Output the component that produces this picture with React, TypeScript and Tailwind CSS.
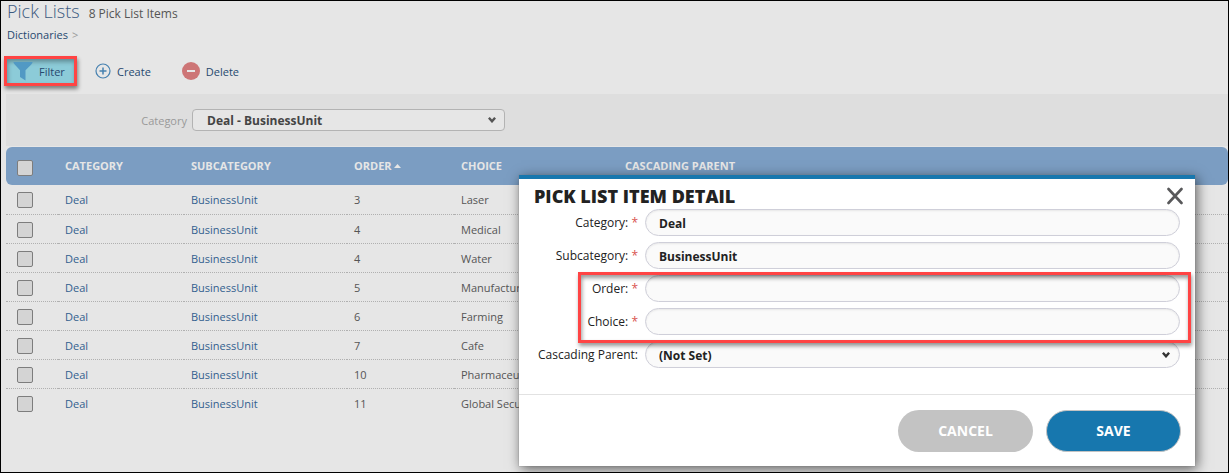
import React, { useState } from 'react';

interface PickListItem {
  id: number;
  order: number;
  choice: string;
}

const items: PickListItem[] = [
  { id: 1, order: 3, choice: 'Laser' },
  { id: 2, order: 4, choice: 'Medical' },
  { id: 3, order: 4, choice: 'Water' },
  { id: 4, order: 5, choice: 'Manufacturing' },
  { id: 5, order: 6, choice: 'Farming' },
  { id: 6, order: 7, choice: 'Cafe' },
  { id: 7, order: 10, choice: 'Pharmaceutical' },
  { id: 8, order: 11, choice: 'Global Security' },
];

const FunnelIcon = () => (
  <svg width="20" height="20" viewBox="0 0 20 20" fill="#5199c4" aria-hidden="true">
    <path d="M0.500 1h19c0 1-.5 1.700-1.200 2.400L12.500 9.200V19.500L7 16V9.200L1.700 3.400C1 2.700.5 2 .5 1z" />
  </svg>
);

const PlusIcon = () => (
  <svg width="16" height="16" viewBox="0 0 16 16" fill="none" stroke="#4681b0" aria-hidden="true">
    <circle cx="8" cy="8" r="7" strokeWidth="1.2" />
    <path d="M8 4.500v7M4.500 8h7" strokeWidth="1.500" />
  </svg>
);

const MinusIcon = () => (
  <svg width="18" height="18" viewBox="0 0 18 18" aria-hidden="true">
    <circle cx="9" cy="9" r="9" fill="#cd7576" />
    <path d="M5 9h8" stroke="#e6e6e6" strokeWidth="2" />
  </svg>
);

const CloseIcon = () => (
  <svg width="16" height="18" viewBox="0 0 16 18" fill="none" stroke="#58585a" strokeWidth="2.600" strokeLinecap="round" aria-hidden="true">
    <path d="M1.500 2l13 14M14.500 2l-13 14" />
  </svg>
);

const Chevron = ({ className }: { className: string }) => (
  <svg width="8" height="6" viewBox="0 0 8 6" fill="none" strokeWidth="2.400" aria-hidden="true" className={`pointer-events-none absolute top-1/2 -translate-y-1/2 ${className}`}>
    <path d="M0.900 0.800L4 4.300l3.100-3.500" />
  </svg>
);

const Checkbox = ({ label }: { label: string }) => (
  <input
    type="checkbox"
    aria-label={label}
    className="block size-4 appearance-none rounded-xs border border-[#7d7d7d] bg-[#d4d4d4] checked:bg-[#7b9dc2]"
  />
);

interface FieldProps {
  id: string;
  label: string;
  required?: boolean;
  children: React.ReactNode;
}

const Field = ({ id, label, required, children }: FieldProps) => (
  <div className="flex items-center gap-[7px]">
    <label htmlFor={id} className="w-[104px] shrink-0 text-right text-xs whitespace-nowrap text-[#222]">
      {label}:{required && <span className="text-[#d9534f]"> *</span>}
    </label>
    <div className="relative flex-1">{children}</div>
  </div>
);

const fieldClass =
  'block h-[27px] w-full appearance-none rounded-full border border-[#cfcfd9] bg-[#fafafa] px-[13px] pt-[2px] text-xs font-bold text-[#222] shadow-[inset_0_1px_2px_rgba(0,0,0,0.08)] outline-none';

const PickListDialog = ({ onClose }: { onClose: () => void }) => {
  const [order, setOrder] = useState('');
  const [choice, setChoice] = useState('');

  return (
    <div
      role="dialog"
      aria-labelledby="dialog-title"
      className="absolute top-[174px] right-[33px] w-[676px] border-t-4 border-[#1777ae] bg-white shadow-[0_0_1px_#777,2px_3px_12px_rgba(0,0,0,0.6)]"
    >
      <div className="flex h-[30px] items-center justify-between pr-3 pl-[15px] pt-[4px]">
        <h2 id="dialog-title" className="text-lg font-extrabold text-[#222]">PICK LIST ITEM DETAIL</h2>
        <button onClick={onClose} aria-label="Close"><CloseIcon /></button>
      </div>

      <form className="relative flex flex-col gap-[6px] pr-[15px] pb-[26px] pl-[15px]">
        <Field id="category" label="Category" required>
          <input id="category" className={fieldClass} defaultValue="Deal" />
        </Field>
        <Field id="subcategory" label="Subcategory" required>
          <input id="subcategory" className={fieldClass} defaultValue="BusinessUnit" />
        </Field>
        <Field id="order" label="Order" required>
          <input id="order" className={fieldClass} value={order} onChange={(e) => setOrder(e.target.value)} />
        </Field>
        <Field id="choice" label="Choice" required>
          <input id="choice" className={fieldClass} value={choice} onChange={(e) => setChoice(e.target.value)} />
        </Field>
        <Field id="parent" label="Cascading Parent">
          <select id="parent" className={fieldClass}>
            <option>(Not Set)</option>
          </select>
          <Chevron className="right-[10px] stroke-[#333]" />
        </Field>
        {/* Highlight around the fields left to fill in */}
        <div className="pointer-events-none absolute top-[63px] right-1 left-[59px] h-[71px] border-3 border-[#ff4444] shadow-[1px_3px_4px_rgba(0,0,0,0.4),inset_1px_3px_4px_rgba(0,0,0,0.4)]" />
      </form>

      <div className="flex justify-end gap-[13px] border-t border-[#e2e2e2] pt-[15px] pr-[14px] pb-[14px] text-sm font-bold text-white">
        <button onClick={onClose} className="h-[42px] w-[135px] rounded-full bg-[#c3c3c3]">CANCEL</button>
        <button className="h-[42px] w-[135px] rounded-full border border-[#c3c3c3] bg-[#1777ae]">SAVE</button>
      </div>
    </div>
  );
};

export default function App() {
  const [isDialogOpen, setIsDialogOpen] = useState(true);

  return (
    <div className="relative min-h-screen overflow-hidden border border-black bg-[#e6e6e6] pl-[5px] font-['Open_Sans',sans-serif] text-[11px] text-[#555]">
      <header className="pl-px">
        <div className="flex h-6 items-baseline gap-[9px]">
          <h1 className="text-lg leading-5 font-light text-[#3c5a80]">Pick Lists</h1>
          <span className="text-xs leading-4">8 Pick List Items</span>
        </div>
        <nav className="flex h-5 items-center gap-1">
          <a href="#dictionaries" className="text-[#27496f]">Dictionaries</a>
          <span className="text-[#999]">&gt;</span>
        </nav>
      </header>

      <div className="flex h-[49px] items-center gap-[22px] pt-[3px] text-[#27496f]">
        <button className="-ml-[2px] flex h-[30px] w-[73px] items-center gap-[6px] border-3 border-[#ff4444] bg-[#8ccbd8] pl-[6px] shadow-[1px_3px_4px_rgba(0,0,0,0.45),inset_1px_3px_4px_rgba(0,0,0,0.3)]">
          <FunnelIcon />
          <span className="pt-[2px]">Filter</span>
        </button>
        <button onClick={() => setIsDialogOpen(true)} className="-ml-[4px] flex items-center gap-[6px]">
          <PlusIcon />
          <span className="pt-[2px]">Create</span>
        </button>
        <button className="ml-[9px] flex items-center gap-[6px]">
          <MinusIcon />
          <span className="pt-[2px]">Delete</span>
        </button>
      </div>

      <main>
        <div className="flex h-[52px] items-center gap-[5px] bg-[#dedede]">
          <label htmlFor="filter-category" className="w-[181px] pt-[2px] text-right text-[#999]">Category</label>
          <div className="relative w-[313px]">
            <select
              id="filter-category"
              className="block h-[22px] w-full appearance-none rounded-sm border border-[#b3b3b3] bg-[#e6e6e6] px-[14px] pt-px text-xs font-bold text-[#444]"
            >
              <option>Deal - BusinessUnit</option>
            </select>
            <Chevron className="right-[9px] stroke-[#555]" />
          </div>
        </div>

        <table className="mt-px w-full table-fixed border-separate border-spacing-0 text-left">
          <colgroup>
            <col className="w-[52px]" />
            <col className="w-[126px]" />
            <col className="w-[163px]" />
            <col className="w-[107px]" />
            <col className="w-[164px]" />
            <col />
          </colgroup>
          <thead>
            <tr className="h-[38px] text-[#e6e6e6] *:bg-[#7b9dc2] *:px-[7px]">
              <th className="rounded-l-md"><div className="pt-[4px] pl-[4px]"><Checkbox label="Select all" /></div></th>
              <th>CATEGORY</th>
              <th>SUBCATEGORY</th>
              <th>
                <span className="flex items-center gap-[2px]">
                  ORDER
                  <svg width="7" height="4" viewBox="0 0 7 4" fill="#e6e6e6" aria-hidden="true"><path d="M0 4l3.500-4L7 4z" /></svg>
                </span>
              </th>
              <th>CHOICE</th>
              <th className="rounded-r-md">CASCADING PARENT</th>
            </tr>
          </thead>
          <tbody className="leading-4">
            {items.map((item) => (
              <tr key={item.id} className="h-[29px] *:border-b *:border-dotted *:border-[#b0b0b0] *:px-[7px] *:pt-[7px] *:align-top first:h-[30px] last:*:border-transparent">
                <td><div className="pl-[4px]"><Checkbox label={`Select ${item.choice}`} /></div></td>
                <td><a href="#deal" className="text-[#335f8f]">Deal</a></td>
                <td><a href="#business-unit" className="text-[#335f8f]">BusinessUnit</a></td>
                <td>{item.order}</td>
                <td>{item.choice}</td>
                <td />
              </tr>
            ))}
          </tbody>
        </table>
      </main>

      {isDialogOpen && <PickListDialog onClose={() => setIsDialogOpen(false)} />}
    </div>
  );
}
